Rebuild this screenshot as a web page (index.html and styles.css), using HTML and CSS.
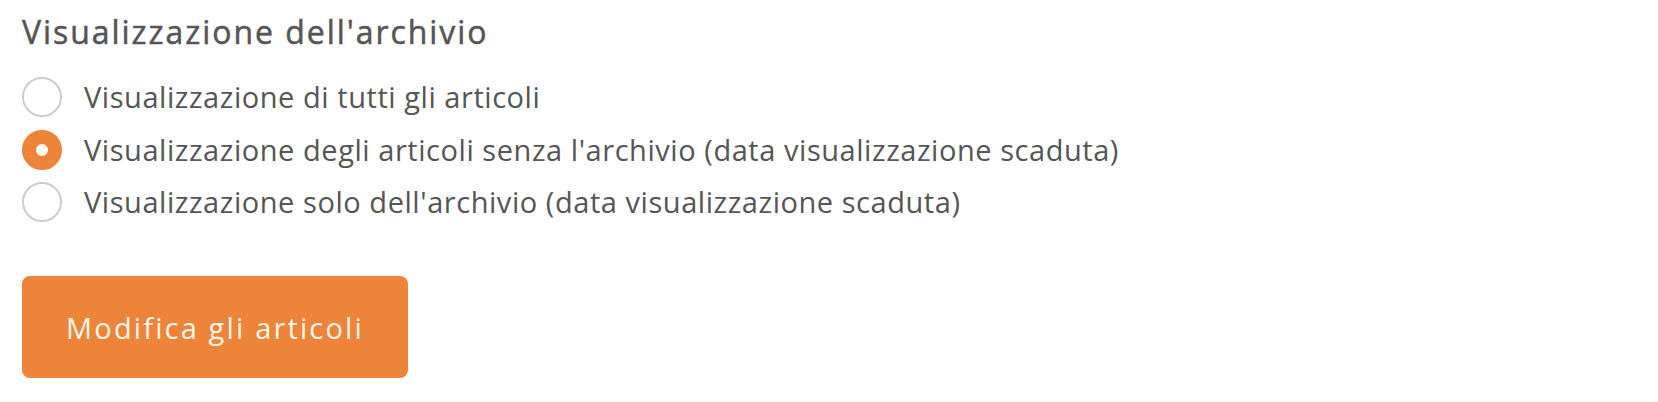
FILE: index.html
```html
<!DOCTYPE html>
<html lang="it">
<head>
<meta charset="utf-8">
<title>Visualizzazione dell'archivio</title>
<link rel="stylesheet" href="styles.css">
</head>
<body>
  <form class="archive-form">
    <h2 class="archive-title">Visualizzazione dell'archivio</h2>
    <div class="radio-list">
      <label class="radio-row">
        <input type="radio" name="archive" class="radio-input">
        <span class="radio-mark"></span>
        <span class="radio-label">Visualizzazione di tutti gli articoli</span>
      </label>
      <label class="radio-row">
        <input type="radio" name="archive" class="radio-input" checked>
        <span class="radio-mark"></span>
        <span class="radio-label">Visualizzazione degli articoli senza l'archivio (data visualizzazione scaduta)</span>
      </label>
      <label class="radio-row">
        <input type="radio" name="archive" class="radio-input">
        <span class="radio-mark"></span>
        <span class="radio-label">Visualizzazione solo dell'archivio (data visualizzazione scaduta)</span>
      </label>
    </div>
    <button type="button" class="btn-primary">Modifica gli articoli</button>
  </form>
</body>
</html>
```

FILE: styles.css
```css
html, body {
  margin: 0;
  padding: 0;
  background: #ffffff;
}

body {
  font-family: "Open Sans", "Noto Sans", "Liberation Sans", sans-serif;
  color: #555555;
}

.archive-form {
  display: flex;
  flex-direction: column;
  align-items: flex-start;
  padding: 10px 22px 0 22px;
}

.archive-title {
  margin: 0;
  font-size: 32px;
  line-height: 44px;
  font-weight: 400;
  color: #555555;
  letter-spacing: 1.95px;
  -webkit-text-stroke: 0.5px #555555;
}

.radio-list {
  display: flex;
  flex-direction: column;
  margin-top: 23px;
  gap: 12.5px;
}

.radio-row {
  display: flex;
  align-items: center;
  gap: 22px;
  cursor: pointer;
}

.radio-input {
  position: absolute;
  opacity: 0;
  pointer-events: none;
}

.radio-mark {
  width: 40px;
  height: 40px;
  box-sizing: border-box;
  border-radius: 50%;
  border: 2px solid #c9ccd3;
  background: #ffffff;
  flex: none;
}

.radio-input:checked + .radio-mark {
  border: 14px solid #ed843a;
  background: #ffffff;
}

.radio-label {
  font-size: 29px;
  line-height: 40px;
  color: #555555;
  letter-spacing: 0.55px;
}

.btn-primary {
  margin-top: 54px;
  width: 386px;
  height: 102px;
  border: none;
  border-radius: 8px;
  background: #ed843a;
  color: #fff6ec;
  font-family: inherit;
  font-size: 29px;
  letter-spacing: 2.15px;
  cursor: pointer;
}
```
